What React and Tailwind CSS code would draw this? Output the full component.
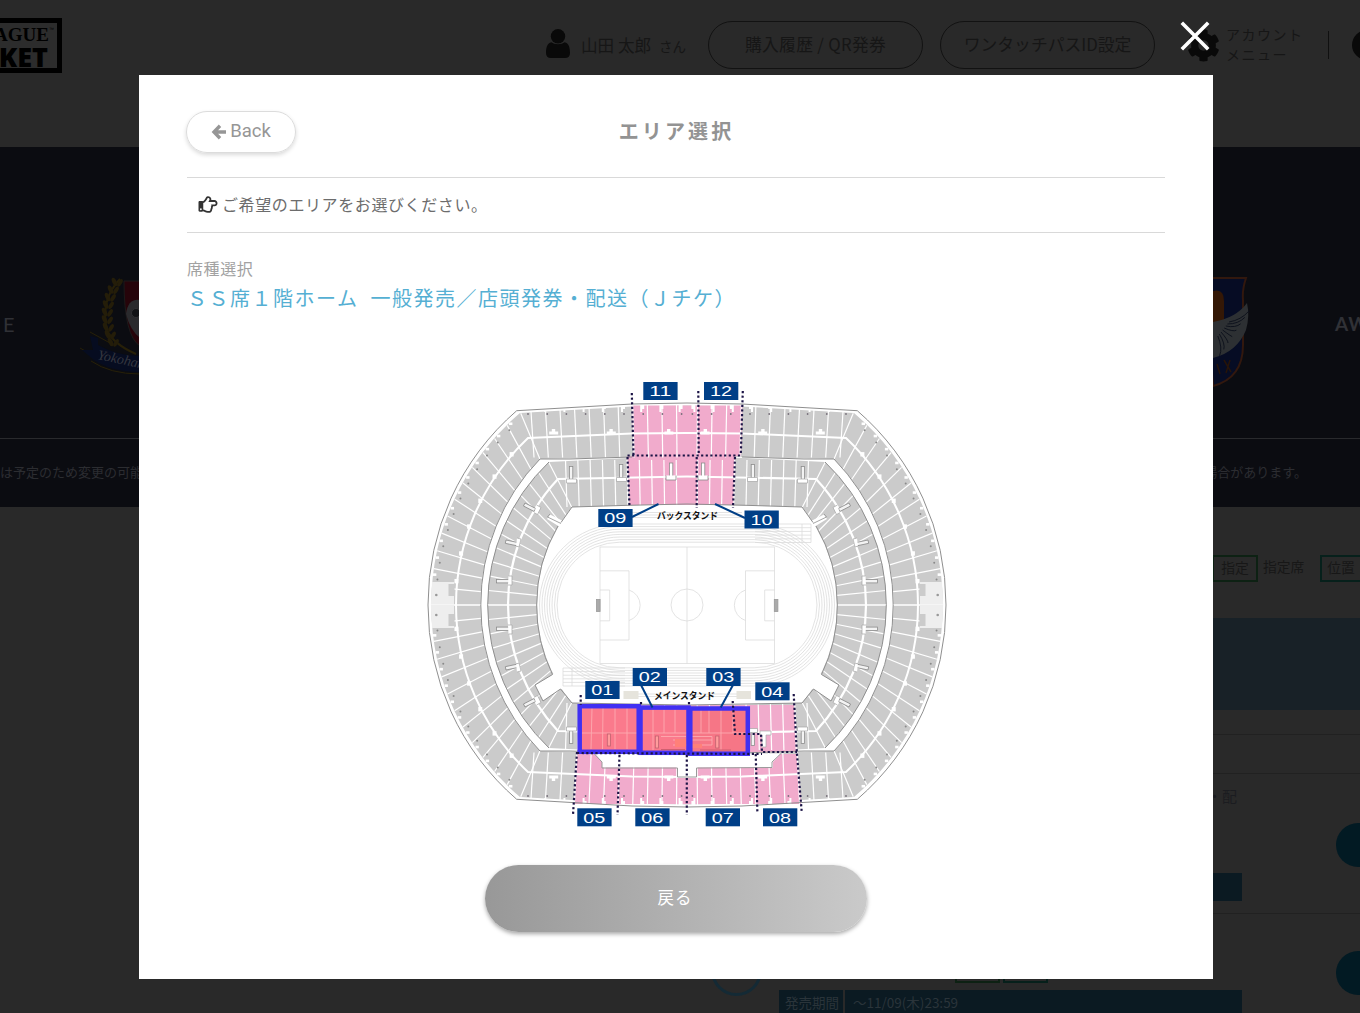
import { FaCog, FaRegHandPointRight } from "react-icons/fa";

const AREA_LABELS = [
  { id: "11", x: 643.3, y: 382 },
  { id: "12", x: 704, y: 382 },
  { id: "09", x: 598.3, y: 509 },
  { id: "10", x: 744.5, y: 510.5 },
  { id: "01", x: 585.3, y: 681 },
  { id: "02", x: 632.7, y: 668 },
  { id: "03", x: 706.3, y: 668 },
  { id: "04", x: 755.3, y: 682.3 },
  { id: "05", x: 577.3, y: 808.3 },
  { id: "06", x: 635.3, y: 808.3 },
  { id: "07", x: 705.7, y: 808.3 },
  { id: "08", x: 763, y: 808.3 },
];

// the bowl is symmetric around (687, 605), so one quarter is drawn four times
const QUARTERS = [
  undefined,
  "translate(1374 0) scale(-1 1)",
  "translate(0 1210) scale(1 -1)",
  "translate(1374 1210) scale(-1 -1)",
];

const point = (cx, r, deg) => {
  const a = (deg * Math.PI) / 180;
  return [cx - r * Math.cos(a), 605 - r * Math.sin(a)];
};

const range = (n) => Array.from({ length: n }, (_, i) => i);

function Radial({ outer, inner, count }) {
  return range(count + 1).map((i) => {
    const t = i / count;
    const [x1, y1] = point(outer.cx, outer.r, outer.deg * t);
    const [x2, y2] = point(inner.cx, inner.r, inner.deg * t);
    return <line key={i} x1={x1} y1={y1} x2={x2} y2={y2} />;
  });
}

function QuarterFill() {
  return (
    <g fill="#cbcbcb">
      <path d="M687 405.5 L632 406.5 L520 413 A250 250 0 0 0 431.3 605 L480.5 605 A209 209 0 0 1 540 459 L687 456 Z" />
      <path d="M687 457 L628 458 L549 462 A198 198 0 0 0 487.7 605 L537 605 A155 155 0 0 1 572 507 L687 504 Z" />
    </g>
  );
}

function QuarterLines() {
  return (
    <g fill="none">
      <g stroke="#fff" strokeWidth="1.2">
        <Radial
          outer={{ cx: 681.1, r: 250, deg: 50.1 }}
          inner={{ cx: 689.5, r: 209, deg: 44.3 }}
          count={12}
        />
        <Radial
          outer={{ cx: 685.7, r: 198, deg: 46.2 }}
          inner={{ cx: 691.7, r: 155, deg: 39.2 }}
          count={11}
        />
        {range(11).map((i) => (
          <line key={i} x1={530.5 + i * 14.6} y1="404" x2={534 + i * 14.3} y2="457.5" />
        ))}
        {range(10).map((i) => (
          <line key={i} x1={565.5 + i * 12.3} y1="460" x2={567 + i * 12.2} y2="507" />
        ))}
      </g>
      <path d="M687 433 L632 433.5 L528 438 A230 230 0 0 0 456 605" stroke="#fff" strokeWidth="2" />
      <path d="M687 476.5 L558 479 A184 184 0 0 0 508 605" stroke="#fff" strokeWidth="2.2" />

      {/* stairs and gates */}
      {range(9).map((i) => {
        const x = 524 + i * 19.2;
        return (
          <g key={i}>
            {i % 3 === 1 && (
              <path d={`M${x + 6} 434.5 v-3 h2.6 v-2.4 h3.4 v2.4 h3 v3 Z`} fill="#fff" />
            )}
            <path d={`M${x + 1} 405 h4 v4 h-2 v3 h-2 Z`} fill="#fff" />
            <circle cx={x + 4} cy="414" r="0.9" fill="#77707a" />
          </g>
        );
      })}
      {range(11).map((i) => {
        const [x, y] = point(681.1, 250, 7 + i * 3.95);
        const [dx, dy] = point(681.1, 245, 6 + i * 3.95);
        const [mx, my] = point(686, 230, 6 + i * 7);
        return (
          <g key={i}>
            <rect x={x} y={y - 1.2} width="3.4" height="2.6" fill="#fff" />
            <circle cx={dx} cy={dy} r="1" fill="#8a8a8a" />
            {i < 6 && <rect x={mx - 2.8} y={my - 2} width="4" height="4.4" fill="#fff" />}
          </g>
        );
      })}
      <path d="M430.8 605.2 L432 582 L454 582 L454 605.2 Z" fill="#eeeeee" />
      <path d="M448.5 584 h6 v12 h-6 Z" fill="#cbcbcb" />
      <circle cx="436.3" cy="595" r="1.3" fill="#999" />

      <g stroke="#8f8f8f" strokeWidth="1">
        <path d="M687 403 L632 404 L516.7 410.7 A256 256 0 0 0 428 605" />
        <path d="M480.8 605 A209 209 0 0 1 540 459 L570 459 L632 457" />
        <path d="M549 462 A198 198 0 0 0 487.7 605" />
      </g>

      <g stroke="#8c8c8c" strokeWidth="0.8" fill="#f3f3f3">
        <rect x="569.4" y="466.5" width="3.4" height="13" />
        <rect x="619.4" y="464.5" width="3.4" height="14" />
        <rect x="525" y="503" width="12" height="3.4" transform="rotate(27 525 503)" />
        <rect x="506" y="540" width="12.5" height="3.4" transform="rotate(12 506 540)" />
        <rect x="496.5" y="579.5" width="13" height="3.4" />
      </g>
      <g stroke="#a5a5a5" strokeWidth="0.7" fill="#fff">
        <path d="M566.5 479 v4 h10 v-4 Z" />
        <path d="M616.5 477.5 v4 h10 v-4 Z" />
        <path d="M536.5 505 l4.5 2.5 l-3.5 7 l-3 -1.6" />
        <path d="M517 538 l4 1 l-2 8 l-3 -1" />
        <path d="M508.5 576 h3.5 v9 h-4" />
      </g>
    </g>
  );
}

function InnerEdges() {
  const top =
    "M687 504 L628 505.3 L572 507 L561 522.5 M558 526 A155 155 0 0 0 536.7 605";
  const bottom =
    "M536.7 605 A155 155 0 0 0 552.5 674.5 L535 685 L543 701 L560.5 689 L572 703 L687 705";
  return (
    <g>
      {[undefined, QUARTERS[1]].map((t, i) => (
        <g key={i} transform={t} stroke="#8f8f8f" strokeWidth="1">
          <path d="M547 519 L550 514.6 L564 521.5 L560 527 Z" fill="#fff" stroke="none" />
          <path d="M561 523.5 L547.5 517 L550 514" fill="none" strokeWidth="0.8" />
          <path d="M554 673.5 L535 685 L543 701 L560.5 689 L575 693 Z" fill="#fff" stroke="none" />
          <path d={top} fill="none" />
          <path d={bottom} fill="none" />
        </g>
      ))}
    </g>
  );
}

function Pitch() {
  return (
    <g fill="none" stroke="#dcdcdc" strokeWidth="0.8">
      {range(8).map((i) => (
        <rect
          key={i}
          x={539.5 + i * 2.5}
          y={524 + i * 2.6}
          width={295 - i * 5}
          height={162 - i * 5.2}
          rx={81 - i * 2.6}
        />
      ))}
      {range(6).map((i) => (
        <g key={i}>
          <path d={`M755 ${524 + i * 3.7} H811`} />
          <path d={`M563 ${668 + i * 3.6} H625`} />
        </g>
      ))}
      <path d="M811 524 V542.5 M802 524 V542.5 M563 668 V686 M572 668 V686" />
      <path d="M632 512.5 H742 M632 515 H742 M632 517.5 H742 M636 694 H738 M636 696.5 H738" />
      <rect x="600" y="547" width="174.5" height="116.5" fill="#fff" />
      <path d="M687 547 V663.5" />
      <circle cx="687" cy="605" r="16" />
      <path d="M600 570.8 H629 V640 H600 M600 590 H609.7 V620.8 H600" />
      <path d="M774.5 570.8 H745.5 V640 H774.5 M774.5 590 H764.7 V620.8 H774.5" />
      <path d="M629 590 A16 16 0 0 1 629 620.5 M745.5 590 A16 16 0 0 0 745.5 620.5" />
      <rect x="596.5" y="599.5" width="3.6" height="12" fill="#aaa" stroke="#999" />
      <rect x="774.3" y="599.5" width="3.6" height="12" fill="#aaa" stroke="#999" />
    </g>
  );
}

function MainStand() {
  return (
    <g>
      {/* concourse between the lower and upper tier */}
      <path d="M594 753.5 H781 L773 762 V767.5 H697 V777 H677 V767.5 H602 V762 Z" fill="#fff" />
      <path
        d="M594 753.5 L602 762 V768 H677.5 V777 H696.5 V768 L772 767.5 V762 L781 753.5"
        fill="none"
        stroke="#999"
      />
      <rect x="579.5" y="706" width="59" height="45.5" fill="#fa7a8c" />
      <rect x="641" y="707.5" width="47" height="45" fill="#fa7a8c" />
      <rect x="690.5" y="708.5" width="56.5" height="45" fill="#f67686" />
      <g stroke="#fdaab0" strokeWidth="0.9" fill="none">
        <path d="M582 733 H747 M592 708 L591 749 M603 708 L602.5 749 M615 708 V749 M627 708 V749" />
        <path d="M653 709 V750 M664 709 V733 M675 709 V733 M701 710 V733 M709 710 V733 M721 710 V750 M733 710 V733" />
        <path d="M661 736.5 H686 M673 740 H686 M673 745 H712 M692 740 H712 M692 736.5 H712 V745" />
      </g>
      <path d="M675 739 h11 v8 h-11 Z M692 744 h10 v4 h-10 Z" fill="#ff8078" />
      <g stroke="#c0616f" strokeWidth="0.8" fill="#ff9c9c">
        <rect x="607.3" y="734" width="3.2" height="12" />
        <rect x="655.3" y="736" width="3.2" height="12" />
        <rect x="715.7" y="736" width="3.2" height="12" />
      </g>
      <path d="M661 749.5 H685 M700 750 H731" stroke="#cf5f70" strokeWidth="1" />
      <path d="M760 731 h11 v4 h-5 v12 h-4 v-12 h-2 Z" fill="#fff" stroke="#aaa" strokeWidth="0.7" />
    </g>
  );
}

function StadiumMap() {
  return (
    <svg viewBox="396 370 560 470" className="h-[470px] w-[560px]">
      {QUARTERS.map((t, i) => (
        <g key={i} transform={t}>
          <QuarterFill />
        </g>
      ))}
      <g fill="#f1abcc">
        <path d="M632 405.5 L742.5 405.5 L741 456 L633.5 456 Z" />
        <path d="M627.5 456 L735 456 L733.5 505 L629.5 505 Z" />
        <path d="M579 705 L794 705 L797 752 L577 752 Z" />
        <path d="M576.5 754 L797.5 754 L801 804 L574.5 804 Z" />
      </g>
      {QUARTERS.map((t, i) => (
        <g key={i} transform={t}>
          <QuarterLines />
        </g>
      ))}
      <g stroke="#8c8c8c" strokeWidth="0.8" fill="#fff">
        <rect x="669.4" y="463" width="3.4" height="14" />
        <rect x="701.4" y="463" width="3.4" height="14" />
        <path d="M666 475.5 v4.5 h10 v-4.5 M698 475.5 v4.5 h10 v-4.5" />
      </g>
      <InnerEdges />
      <Pitch />
      <MainStand />

      <g fill="#e6e4dc">
        <rect x="623.5" y="691" width="15" height="8" />
        <rect x="736.5" y="691" width="14.5" height="8" />
      </g>

      <g fill="none" stroke="#4030f2" strokeWidth="4.5">
        <rect x="579.7" y="706.2" width="59" height="45.6" />
        <rect x="640.5" y="707.6" width="48" height="45.2" />
        <rect x="690.3" y="708.5" width="57.5" height="45.2" />
      </g>

      <g fill="none" stroke="#1c1446" strokeWidth="2.2" strokeDasharray="2.2 2.4">
        <path d="M631.8 393 L633.5 455.5" />
        <path d="M698.3 391 L698.7 455 M696.7 457 V508" />
        <path d="M742.8 391 L740.8 455" />
        <path d="M627.5 455.5 H741" />
        <path d="M627.5 457 L629.5 507 M735 457 L733 508" />
        <path d="M580.7 695 V705 M577 752 L573 815" />
        <path d="M641 702 V706 M689 702 V706" />
        <path d="M577 753 L762 754" />
        <path d="M619.5 755 L617.5 815 M686.8 755 V815 M755.7 754 L757.4 813" />
        <path d="M732.7 701 L735 734 H761 L762 752 H797" />
        <path d="M793.7 694 L796.8 752 L801.8 813" />
      </g>

      <g stroke="#003f87" strokeWidth="2">
        <path d="M632 517 L658.5 504" />
        <path d="M745 518 L715 504" />
        <path d="M641 685 L652.5 707.5" />
        <path d="M733 685 L720.7 707.5" />
      </g>

      {AREA_LABELS.map((a) => (
        <g key={a.id}>
          <rect x={a.x} y={a.y} width="34.3" height="18" fill="#003f87" />
          <text
            x={a.x + 6}
            y={a.y + 14.2}
            fill="#fff"
            fontSize="15.5"
            fontFamily="Liberation Sans, sans-serif"
            textLength="22"
            lengthAdjust="spacingAndGlyphs"
          >
            {a.id}
          </text>
        </g>
      ))}

      <g
        fill="#111"
        fontSize="9.5"
        fontWeight="700"
        fontFamily="Noto Sans CJK JP, sans-serif"
      >
        <text x="657" y="518.5" textLength="61" lengthAdjust="spacingAndGlyphs">
          バックスタンド
        </text>
        <text x="654" y="699" textLength="61" lengthAdjust="spacingAndGlyphs">
          メインスタンド
        </text>
      </g>
    </svg>
  );
}

function HeaderPill({ children }) {
  return (
    <div className="flex h-12 w-[215px] shrink-0 items-center justify-center rounded-full border-[1.5px] border-[#121212] text-[16.8px] whitespace-nowrap">
      {children}
    </div>
  );
}

function Header() {
  return (
    <header className="flex h-[147px] items-start bg-[#292929] text-[#161616]">
      <div className="mt-[18px] flex h-[55px] w-[62px] shrink-0 flex-col items-end overflow-hidden border-[5px] border-l-0 border-black bg-[#2c2c2c] pr-[9px] text-black">
        <div className="flex items-start">
          <span className="mt-[3px] font-['Liberation_Serif',serif] text-[19px] leading-[18px] font-bold">
            AGUE
          </span>
          <span className="-mr-[6px] pt-[3px] font-['Liberation_Sans',sans-serif] text-[5px] leading-[6px]">™</span>
        </div>
        <span className="mt-px font-['Open_Sans',sans-serif] text-[27px] leading-[24px] font-extrabold">
          KET
        </span>
      </div>
      <svg viewBox="0 0 24 30" className="mt-[29px] ml-[484px] h-[30px] w-6 shrink-0" fill="#090909">
        <circle cx="12" cy="7.3" r="7.2" />
        <path d="M5.5 13.2 C8 15.8 16 15.8 18.5 13.2 C23 14 24 19 24 24 Q24 29 19 29 H5 Q0 29 0 24 C0 19 1 14 5.5 13.2 Z" />
      </svg>
      <div className="mt-[33px] ml-[11px] flex w-[127px] shrink-0 items-baseline gap-2 text-[16.6px] leading-6 whitespace-nowrap">
        <span>山田 太郎</span>
        <span className="text-[13.5px]">さん</span>
      </div>
      <div className="mt-[21px] flex shrink-0 gap-[17px]">
        <HeaderPill>
          <span className="tracking-[0.3px]">購入履歴 / QR発券</span>
        </HeaderPill>
        <HeaderPill>
          <span>ワンタッチパスID設定</span>
        </HeaderPill>
      </div>
      <FaCog className="mt-[29px] ml-[32px] h-[33px] w-[33px] shrink-0 text-[#090909]" />
      <div className="mt-[25px] ml-[6px] w-[102px] shrink-0 text-[14px] leading-[19.5px] tracking-[1.5px]">
        アカウント
        <br />
        メニュー
      </div>
      <div className="mt-[31px] h-7 w-px shrink-0 bg-[#101010]" />
      <div className="mt-[30px] ml-[23px] h-[30px] w-[30px] shrink-0 rounded-full bg-[#090909]" />
    </header>
  );
}

function HomeCrest() {
  return (
    <svg viewBox="80 275 60 105" className="h-[105px] w-[60px] shrink-0">
      <path d="M124 281 H140 V346 Q124 336 124 281 Z" fill="#26040a" stroke="#1c1a1a" />
      <path d="M126 314 Q128 298 140 300 V338 Q130 330 126 314 Z" fill="#2a2a2d" />
      <circle cx="136" cy="313" r="4.5" fill="#121316" stroke="#303033" />
      <path d="M120 279 Q100 300 107 330 Q113 344 136 354" fill="none" stroke="#272008" strokeWidth="2" />
      {range(9).map((i) => {
        const y = 282 + i * 7.5;
        const x = 107 + Math.pow((i - 4.5) / 4.5, 2) * 10;
        return (
          <g key={i} fill="#241d09">
            <ellipse cx={x - 2.5} cy={y} rx="2.2" ry="4.6" transform={`rotate(-25 ${x - 2.5} ${y})`} />
            <ellipse cx={x + 3.5} cy={y + 1} rx="2" ry="4.3" transform={`rotate(30 ${x + 3.5} ${y})`} />
          </g>
        );
      })}
      <path d="M80 348 L94 356 M90 332 L110 343 M91 361 Q110 374 140 374" stroke="#272008" fill="none" />
      <path d="M90 336 L98 338 V345 Q118 356 140 356 V372 Q112 372 94 360 L82 350 L93 350 Z" fill="#060c20" />
      <text
        x="97"
        y="359"
        fontSize="14"
        fontStyle="italic"
        fontFamily="Liberation Serif, serif"
        fill="#34363f"
        transform="rotate(12 97 359)"
      >
        Yokohan
      </text>
    </svg>
  );
}

function AwayCrest() {
  return (
    <svg viewBox="1213 270 38 118" className="h-[118px] w-[38px] shrink-0">
      <path d="M1205 278 L1246 278 Q1242 290 1243 300 L1243 345 Q1243 378 1213 386 Z" fill="#060c24" stroke="#32180e" strokeWidth="2" />
      <path d="M1213 291 Q1224 288 1224 301 L1224 322 H1213 Z" fill="#341806" />
      <path d="M1213 322 Q1236 318 1247 303 Q1250 316 1246 330 Q1237 352 1213 358 Z" fill="#2d3033" />
      {range(8).map((i) => (
        <path
          key={i}
          d={`M${1229 - i * 1.6} ${322 + i * 2} Q${1241 - i * 2.6} ${320 + i * 4} ${1249 - i * 4.2} ${311 + i * 6.4}`}
          stroke="#0a0f1a"
          strokeWidth="0.9"
          fill="none"
        />
      ))}
      <path d="M1217 364 L1220 374 M1224 360 L1231 372 M1230 360 L1226 373" stroke="#271408" strokeWidth="1.5" />
    </svg>
  );
}

function Tag({ className, children }) {
  return (
    <span className={"flex h-[27px] items-center justify-center border-2 pb-[2px] text-[13.8px] " + className}>
      {children}
    </span>
  );
}

function Background() {
  return (
    <div className="h-[1013px] w-[1360px] overflow-hidden bg-[#292929] font-['Noto_Sans_CJK_JP',sans-serif]">
      <Header />
      <section className="bg-[#0b0c11]">
        <div className="flex h-[291px] items-start justify-between">
          <div className="flex items-start">
            <div className="mt-[165px] w-[18px] pl-[3px] font-['Lato',sans-serif] text-[20px] leading-6 text-[#303136]">
              E
            </div>
            <div className="mt-[128px] ml-[62px]">
              <HomeCrest />
            </div>
          </div>
          <div className="flex w-[147px] items-start">
            <div className="mt-[123px]">
              <AwayCrest />
            </div>
            <div className="mt-[165px] ml-[84px] font-['Lato',sans-serif] text-[19px] leading-6 font-bold tracking-[1px] text-[#303136]">
              AW
            </div>
          </div>
        </div>
        <div className="flex h-[69px] items-center justify-between border-t border-[#292a2d] pr-[53px] pb-[3px] text-[13px] text-[#2c2d31]">
          <span>は予定のため変更の可能</span>
          <span>場合があります。</span>
        </div>
      </section>
      <div className="flex h-[111px] items-start justify-end pt-[48px] text-[#171717]">
        <Tag className="w-[46px] border-[#0d2113]">指定</Tag>
        <span className="w-[62px] pl-[5px] text-[13.8px] leading-[23px]">指定席</span>
        <Tag className="w-[40px] border-r-0 border-[#06201b]">位置</Tag>
      </div>
      <div className="ml-[720px] h-[92px] bg-[#182127]" />
      <div className="mt-6 ml-[720px] h-10 border-y border-[#212121]" />
      <div className="ml-[720px] flex h-[140px] justify-between border-b border-[#212121]">
        <div className="flex w-[522px] flex-col items-end justify-between pt-[10px] pb-3">
          <span className="pr-[5px] text-[15px] leading-6 text-[#1b1c20]">・配</span>
          <div className="h-7 w-[463px] bg-[#0b1a22]" />
        </div>
        <div className="mt-[49px] h-11 w-6 rounded-l-full bg-[#021a23]" />
      </div>
      <div className="ml-[711px] flex h-[100px] justify-between">
        <div className="flex">
          <div className="mt-[31px] h-[51px] w-[51px] rounded-full border-[3px] border-[#142a35]" />
          <div className="ml-[17px] flex w-[463px] flex-col">
            <div className="mt-[42px] mb-[7px] ml-[176px] flex gap-[3px]">
              <div className="h-[27px] w-[45px] border-2 border-[#0d2113]" />
              <div className="h-[27px] w-[45px] border-2 border-[#06201b]" />
            </div>
            <div className="flex h-7 bg-[#0b1a22] text-[13.5px] leading-[24px] text-[#2a343a]">
              <span className="w-[66px] border-r-2 border-[#292929] pl-1.5">発売期間</span>
              <span className="pl-2">～11/09(木)23:59</span>
            </div>
          </div>
        </div>
        <div className="mt-[37px] h-11 w-6 rounded-l-full bg-[#021a23]" />
      </div>
    </div>
  );
}

function BackArrow() {
  return (
    <svg viewBox="0 0 16 16" className="h-4 w-4" fill="none" stroke="currentColor" strokeWidth="3.4">
      <path d="M9 1.8 L3 8 L9 14.2 M3.4 8 H15" />
    </svg>
  );
}

function AreaDialog() {
  return (
    <div className="h-[904px] w-[1074px] bg-white px-12 pt-9 font-['Noto_Sans_CJK_JP',sans-serif]">
      <div className="grid h-[66px] grid-cols-[1fr_auto_1fr] items-start">
        <button className="-ml-px flex h-[42px] w-[110px] items-center justify-center gap-[3px] rounded-full border border-[#dcdcdc] font-['Roboto',sans-serif] text-[18.5px] text-[#969696] shadow-[0_2px_4px_rgba(0,0,0,0.15)]">
          <BackArrow />
          <span>Back</span>
        </button>
        <h2 className="pt-[5px] pl-px text-[20px] leading-[30px] font-bold tracking-[3.1px] text-[#939393]">
          エリア選択
        </h2>
      </div>
      <div className="flex h-14 items-center gap-1 border-y border-[#d9d9d9] pb-[2px] pl-[11px] text-[16px] tracking-[0.6px] text-[#6c6c6c]">
        <FaRegHandPointRight className="h-[19px] w-5 text-[#333]" />
        <span>ご希望のエリアをお選びください。</span>
      </div>
      <p className="mt-[23px] text-[16px] leading-6 tracking-[0.6px] text-[#a2a2a2]">席種選択</p>
      <p className="mt-[3px] text-[20px] leading-[30px] tracking-[1.5px] whitespace-nowrap text-[#55afd3] [word-spacing:6px]">
        ＳＳ席１階ホーム 一般発売／店頭発券・配送（Ｊチケ）
      </p>
      <div className="mt-[57px] flex flex-col items-center">
        <StadiumMap />
        <button className="mt-[25px] h-[67px] w-[382px] rounded-full bg-linear-to-r from-[#989898] to-[#cacaca] pr-[2px] pb-[2px] text-[16.5px] tracking-[1px] text-white shadow-[0_2px_4px_rgba(0,0,0,0.35)]">
          戻る
        </button>
      </div>
    </div>
  );
}

export default function App() {
  return (
    <div className="relative h-[1013px] w-[1360px] overflow-hidden">
      <Background />
      <div className="absolute inset-0 pt-[75px] pl-[139px]">
        <AreaDialog />
      </div>
      <svg
        viewBox="0 0 30 30"
        className="absolute top-[21px] left-[1180px] h-[30px] w-[30px]"
        stroke="#fff"
        strokeWidth="3.6"
      >
        <path d="M1.8 1.8 L28.2 28.2 M28.2 1.8 L1.8 28.2" />
      </svg>
    </div>
  );
}
